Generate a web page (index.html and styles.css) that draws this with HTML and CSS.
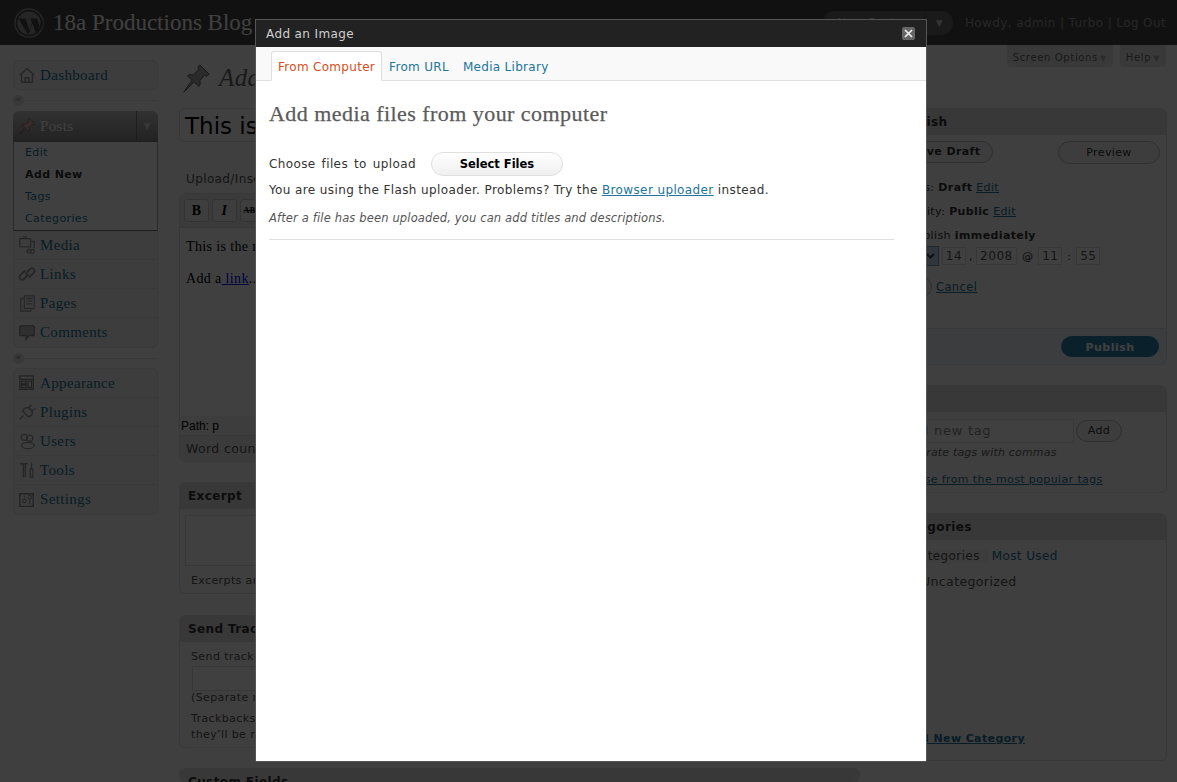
FILE: index.html
```html
<!DOCTYPE html>
<html lang="en">
<head>
<meta charset="utf-8">
<title>Add New Post</title>
<link rel="stylesheet" href="styles.css">
</head>
<body>
<svg class="defs" width="0" height="0" aria-hidden="true">
  <symbol id="pin" viewBox="0 0 32 32"><path d="M20 2l10 10-3 2-2-1-5 6c1 3 0 5-1 6l-5-5-11 11 9-13-5-4c1-2 3-2 6-1l6-6-1-2z" fill="currentColor" stroke="#555"/></symbol>
</svg>
<header class="top">
  <svg class="wplogo" width="30" height="30" viewBox="0 0 30 30"><circle cx="15" cy="15" r="14" fill="none" stroke="#999" stroke-width="1.4"/><circle cx="15" cy="15" r="11.6" fill="#999"/><path d="M4.5 10.5h7l4 12 2.6-7.5-1.6-4.5h6.6l4 12 2-6.5-1-5.5-4.5 15h-1.6l-3.5-10-3.5 10h-1.6z" fill="#464646"/></svg>
  <h1 class="blogname">18a Productions Blog</h1>
  <div class="favs"><span class="favs-main">New Post</span><span class="favs-arrow">▼</span></div>
  <p class="howdy">Howdy, <a>admin</a> | <a>Turbo</a> | <a>Log Out</a></p>
</header>
<div class="wrap">
  <nav class="side">
    <ul class="menu menu-dash">
      <li class="item"><svg class="ic" viewBox="0 0 20 20"><path d="M2 10l8-7 8 7M4 9v9h12V9M8 18v-5h4v5" fill="none" stroke="#999" stroke-width="1.5"/></svg>Dashboard</li>
    </ul>
    <div class="sep"><span class="sep-dot">«</span></div>
    <ul class="menu">
      <li class="item active"><svg class="ic" viewBox="0 0 32 32"><use href="#pin"/></svg>Posts<span class="toggle">▼</span></li>
      <li class="subs">
        <a class="sub">Edit</a>
        <a class="sub cur">Add New</a>
        <a class="sub">Tags</a>
        <a class="sub">Categories</a>
      </li>
      <li class="item"><svg class="ic" viewBox="0 0 20 20"><path d="M2 3h12v9H2zM5 1h4v2M15 6h3v8M12 15a2 2 0 1 0 .1 0M16 15a2 2 0 1 0 .1 0" fill="none" stroke="#999" stroke-width="1.4"/></svg>Media</li>
      <li class="item"><svg class="ic" viewBox="0 0 20 20"><path d="M8 10l6-6a3 3 0 0 1 4 4l-6 6M12 10l-6 6a3 3 0 0 1-4-4l6-6" fill="none" stroke="#999" stroke-width="2"/></svg>Links</li>
      <li class="item"><svg class="ic" viewBox="0 0 20 20"><path d="M7 2h11v14H7zM3 5h4M3 5v14h11v-3M9 5h7M9 8h7M9 11h7" fill="none" stroke="#999" stroke-width="1.4"/></svg>Pages</li>
      <li class="item last"><svg class="ic" viewBox="0 0 20 20"><path d="M3 2h14a1 1 0 0 1 1 1v9a1 1 0 0 1-1 1h-5l-3 4v-4H3a1 1 0 0 1-1-1V3a1 1 0 0 1 1-1z" fill="#bbb" stroke="#888" stroke-width="1.4"/></svg>Comments</li>
    </ul>
    <div class="sep sep-short"><span class="sep-dot">«</span></div>
    <ul class="menu">
      <li class="item"><svg class="ic" viewBox="0 0 20 20"><path d="M2 2h15v15H2zM2 6h15M4 8h5v3H4zM4 12h5v3H4zM11 8h4v7h-4z" fill="none" stroke="#888" stroke-width="1.4"/></svg>Appearance</li>
      <li class="item"><svg class="ic" viewBox="0 0 20 20"><path d="M2 18l4-4M5 9l6 6c3 0 5-2 5-5l-2-3-3-2c-3 0-5 2-6 4zM11 6l4-4M15 9l4-3" fill="none" stroke="#999" stroke-width="1.6"/></svg>Plugins</li>
      <li class="item"><svg class="ic" viewBox="0 0 20 20"><circle cx="7" cy="6" r="3.4" fill="none" stroke="#999" stroke-width="1.4"/><circle cx="13" cy="7" r="3.4" fill="none" stroke="#999" stroke-width="1.4"/><ellipse cx="11" cy="15" rx="7" ry="3.6" fill="none" stroke="#999" stroke-width="1.4"/></svg>Users</li>
      <li class="item"><svg class="ic" viewBox="0 0 20 20"><path d="M2 3h9M6 3v15M8 3v15M15 2v7M13.5 9h3v9h-3z" fill="none" stroke="#999" stroke-width="1.5"/></svg>Tools</li>
      <li class="item last"><svg class="ic" viewBox="0 0 20 20"><path d="M2 3h15v14H2z" fill="none" stroke="#888" stroke-width="1.5"/><circle cx="7" cy="11" r="2" fill="none" stroke="#999" stroke-width="1.3"/><circle cx="13" cy="7" r="2" fill="none" stroke="#999" stroke-width="1.3"/><path d="M7 5v4M13 9v6" stroke="#999" stroke-width="1.3"/></svg>Settings</li>
    </ul>
  </nav>
  <main class="content">
    <div class="screen-meta">
      <span class="meta-tab">Screen Options<i class="meta-arrow">▼</i></span>
      <span class="meta-tab">Help<i class="meta-arrow">▼</i></span>
    </div>
    <div class="heading">
      <svg class="bigpin" viewBox="0 0 32 32"><use href="#pin"/></svg>
      <h2 class="pagetitle">Add New Post</h2>
    </div>
    <div class="cols">
      <div class="leftcol">
        <div class="titlebox">This is the post title</div>
        <p class="upload">Upload/Insert</p>
        <section class="editor">
          <div class="toolbar">
            <span class="tbtn">B</span><span class="tbtn">I</span><span class="tbtn strike">ABC</span>
          </div>
          <div class="edit-body">
            <p class="edit-p">This is the main content of the post.</p>
            <p class="edit-p">Add a<a class="edit-link"> link</a>...</p>
          </div>
          <div class="pathrow">Path: p</div>
          <div class="wordrow">Word count: 12</div>
        </section>
        <section class="box box-excerpt">
          <h3 class="box-h">Excerpt</h3>
          <div class="excerpt-area"></div>
          <p class="small">Excerpts are optional hand-crafted summaries of your content.</p>
        </section>
        <section class="box box-track">
          <h3 class="box-h">Send Trackbacks</h3>
          <p class="small track-l">Send trackbacks to:</p>
          <div class="track-input"></div>
          <p class="small track-s">(Separate multiple URLs with spaces)</p>
          <p class="small track-n">Trackbacks are a way to notify legacy blog systems that you’ve linked to them. If you link other blogs,<br>they’ll be notified automatically.</p>
        </section>
        <section class="box box-custom">
          <h3 class="box-h">Custom Fields</h3>
        </section>
      </div>
      <aside class="rightcol">
        <section class="box box-publish">
          <h3 class="box-h">Publish</h3>
          <div class="pub-actions"><span class="pill save">Save Draft</span><span class="pill preview">Preview</span></div>
          <p class="pub-line first">Status: <b>Draft</b> <a class="lnk">Edit</a></p>
          <p class="pub-line vis">Visibility: <b>Public</b> <a class="lnk">Edit</a></p>
          <p class="pub-line when">Publish <b>immediately</b></p>
          <div class="dateline"><span class="sel">Dec<i class="sel-arrow"><svg width="9" height="6" viewBox="0 0 9 6"><path d="M1 1l3.500 3.500L8 1" fill="none" stroke="#345" stroke-width="2"/></svg></i></span><span class="inp w23">14</span><span>,</span><span class="inp w41">2008</span><span class="at">@</span><span class="inp w24">11</span><span class="colon">:</span><span class="inp w24">55</span></div>
          <div class="okline"><span class="pill ok">OK</span><a class="lnk">Cancel</a></div>
          <div class="pub-foot"><span class="pill primary">Publish</span></div>
        </section>
        <section class="box box-tags">
          <h3 class="box-h">Tags</h3>
          <div class="tagline"><span class="taginp">Add new tag</span><span class="pill add">Add</span></div>
          <p class="hint">Separate tags with commas</p>
          <a class="lnk popular">Choose from the most popular tags</a>
        </section>
        <section class="box box-cats">
          <h3 class="box-h">Categories</h3>
          <div class="cat-tabs"><span class="cat-all">All Categories</span><a class="cat-used">Most Used</a></div>
          <p class="cat-item">Uncategorized</p>
          <a class="lnk addcat">+ Add New Category</a>
        </section>
      </aside>
    </div>
  </main>
</div>

<div class="overlay"></div>
<div class="modal" role="dialog">
  <div class="modal-title"><span>Add an Image</span><span class="close"><svg width="9" height="9" viewBox="0 0 9 9"><path d="M1 1l7 7M8 1l-7 7" stroke="#eee" stroke-width="1.7"/></svg></span></div>
  <div class="tabs"><a class="tab on">From Computer</a><a class="tab">From URL</a><a class="tab">Media Library</a></div>
  <div class="modal-body">
    <h3 class="m-head">Add media files from your computer</h3>
    <div class="choose"><span>Choose files to upload</span><span class="select">Select Files</span></div>
    <p class="m-line">You are using the Flash uploader. Problems? Try the <a class="m-link">Browser uploader</a> instead.</p>
    <p class="m-note">After a file has been uploaded, you can add titles and descriptions.</p>
    <hr class="m-rule">
  </div>
</div>
</body>
</html>
```
FILE: styles.css
```css
* { box-sizing: border-box; }
html, body { margin: 0; height: 782px; overflow: hidden; }
body { background: #f9f9f9; color: #333; font: 12px "DejaVu Sans", sans-serif; letter-spacing: .385px; position: relative; }
p, h1, h2, h3, ul { margin: 0; padding: 0; }
ul { list-style: none; }
.defs { position: absolute; }

.top { height: 45px; background: #464646; display: flex; align-items: center; padding: 0 11px 0 14px; color: #ddd; }
.wplogo { flex: none; }
.blogname { font: 400 23px "Liberation Serif", serif; letter-spacing: 0; color: #fff; margin-left: 9px; flex: 1; }
.favs { width: 130px; height: 24px; border-radius: 12px; background: #6a6a6a; display: flex; align-items: center; margin-right: 12px; font-size: 12px; color: #ccc; }
.favs-main { flex: 1; padding-left: 14px; }
.favs-arrow { width: 28px; border-left: 1px solid #555; height: 24px; line-height: 24px; font-size: 9px; text-align: center; color: #ccc; }
.howdy { font-size: 12px; color: #999; }

.wrap { display: flex; padding-left: 13px; }
.side { width: 145px; flex: none; padding-top: 15px; }
.menu { border: 1px solid #e3e3e3; border-radius: 6px; background: #f1f1f1; }
.item { height: 29px; display: flex; align-items: center; border-bottom: 1px solid #e3e3e3; font: 15px "Liberation Serif", serif; letter-spacing: .35px; color: #21759b; position: relative; padding-left: 4px; }
.item.last, .menu-dash .item { border-bottom: 0; }
.menu-dash .item { height: 28px; }
.ic { width: 18px; height: 18px; margin-right: 4px; flex: none; }
.active { background: linear-gradient(#c4c4c4, #8a8a8a); color: #fff; border-radius: 6px 6px 0 0; margin: -1px -1px 0; padding-left: 5px; height: 30px; width: calc(100% + 2px); border-bottom: 0; }
.active .ic { color: #e2a8a8; }
.toggle { position: absolute; right: 0; top: 0; width: 22px; height: 30px; text-align: center; font: 9px/30px "DejaVu Sans", sans-serif; color: #ddd; border-left: 1px solid #777; }
.subs { background: #fff; border: 1px solid #aaa; border-top-color: #777; border-bottom-color: #777; margin: 0 -1px; display: flex; flex-direction: column; height: 90px; padding-left: 11px; position: relative; }
.sub { height: 22px; line-height: 22px; font-size: 11px; color: #21759b; }
.cur { color: #333; font-weight: 700; }
.sep { height: 21px; display: flex; align-items: center; position: relative; }
.sep-short { height: 20px; }
.sep::after { content: ""; flex: 1; height: 1px; background: #e3e3e3; }
.sep-dot { width: 11px; height: 11px; border-radius: 50%; background: #ddd; font-size: 9px; line-height: 9px; text-align: center; color: #999; }

.content { flex: 1; margin-left: 21px; padding-right: 10px; min-width: 0; }
.screen-meta { display: flex; justify-content: flex-end; gap: 7px; height: 22px; padding-right: 1px; }
.meta-tab { height: 22px; background: #e3e3e3; border-radius: 0 0 4px 4px; padding: 0 6px; font-size: 10px; line-height: 25px; color: #666; letter-spacing: .65px; }
.meta-arrow { font-style: normal; font-size: 8px; color: #aaa; margin-left: 2px; }
.heading { display: flex; align-items: center; height: 41px; padding-bottom: 20px; }
.bigpin { width: 30px; height: 30px; margin-left: 2px; flex: none; color: #aaa; }
.pagetitle { font: italic 400 25px "Liberation Serif", serif; color: #666; margin-left: 8px; }

.cols { display: flex; justify-content: space-between; }
.leftcol { width: 681px; }
.rightcol { width: 281px; }
.titlebox { height: 34px; border: 1px solid #dfdfdf; border-radius: 6px; background: #fff; padding-left: 5px; font-size: 23px; letter-spacing: 0; line-height: 35px; color: #000; white-space: nowrap; overflow: hidden; }
.upload { margin-top: 30px; padding-left: 7px; font-size: 12px; height: 15px; line-height: 15px; color: #555; }
.editor { margin-top: 6px; border: 1px solid #dfdfdf; border-radius: 6px; height: 269px; display: flex; flex-direction: column; background: #fff; }
.toolbar { height: 34px; background: #ececec; display: flex; gap: 3px; padding: 5px 4px 0; border-bottom: 1px solid #dfdfdf; border-radius: 6px 6px 0 0; flex: none; }
.tbtn { width: 25px; height: 23px; background: #f6f6f6; border: 1px solid #ccc; border-radius: 3px; font: 700 14px/21px "Liberation Serif", serif; text-align: center; color: #000; }
.strike { font-size: 8px; text-decoration: line-through; }
.tbtn:nth-child(2) { font-style: italic; }
.edit-body { flex: 1; padding: 11px 6px; font: 14px "Liberation Serif", serif; letter-spacing: .37px; color: #000; }
.edit-p { margin-bottom: 14px; height: 18px; }
.edit-link { color: #00f; text-decoration: underline; }
.pathrow { height: 20px; background: #f1f1f1; border-bottom: 1px solid #dfdfdf; font: 12px/20px "Liberation Sans", sans-serif; letter-spacing: 0; color: #000; padding-left: 1px; flex: none; }
.wordrow { height: 25px; padding-left: 6px; line-height: 25px; font-size: 12.5px; color: #555; background: #eaeaea; border-radius: 0 0 6px 6px; flex: none; }

.box { border: 1px solid #dfdfdf; border-radius: 6px; background: #f9f9f9; }
.box-h { height: 26px; background: #dfdfdf; border-radius: 5px 5px 0 0; font-size: 12px; font-weight: 700; line-height: 26px; padding-left: 8px; color: #333; }
.small { font-size: 11px; color: #555; line-height: 16px; white-space: nowrap; }
.box-excerpt { margin-top: 20px; height: 112px; }
.excerpt-area { margin: 6px 5px 0; height: 51px; background: #fff; border: 1px solid #ddd; }
.box-excerpt .small { margin-top: 7px; padding-left: 11px; }
.box-track { margin-top: 21px; height: 133px; }
.track-l { padding: 7px 11px 0; }
.track-input { margin: 1px 12px 0; height: 25px; background: #fff; border: 1px solid #ddd; }
.track-s { padding: 0 11px; margin-top: -1px; }
.track-n { padding: 5px 11px 0; }
.box-custom { margin-top: 20px; height: 14px; overflow: hidden; border-bottom: 0; }

.box-publish { height: 257px; position: relative; }
.pub-actions { display: flex; justify-content: space-between; padding: 0 6px 0 11px; height: 34px; align-items: center; }
.pill { display: inline-block; border: 1px solid #bbb; border-radius: 12px; background: #f2f2f2; text-align: center; font-size: 11px; height: 22px; line-height: 20px; color: #333; }
.save { width: 95px; font-weight: 700; }
.preview { width: 102px; height: 23px; line-height: 22px; }
.pub-line { padding-left: 6px; font-size: 11px; line-height: 24px; height: 24px; color: #333; }
.vis { padding-left: 5px; }
.when { padding-left: 22px; }
.first { margin-top: 7px; }
.lnk { color: #21759b; text-decoration: underline; }
.dateline { display: flex; align-items: center; gap: 3px; padding-left: 10px; height: 22px; margin-top: -3px; font-size: 11px; }
.sel { width: 42px; height: 20px; background: #fff; border: 1px solid #7f9db9; font-size: 11px; line-height: 18px; display: flex; justify-content: space-between; }
.sel-arrow { width: 15px; background: #c1d2ee; display: flex; align-items: center; justify-content: center; }
.inp { height: 18px; background: #fff; border: 1px solid #ddd; text-align: center; line-height: 16px; font-size: 12px; color: #555; letter-spacing: .5px; }
.w23 { width: 24px; }
.w41 { width: 41px; }
.w24 { width: 24px; }
.at { margin: 0 2px; }
.colon { margin: 0 2px; }
.okline { display: flex; align-items: center; gap: 4px; padding-left: 11px; margin-top: 9px; font-size: 11.5px; }
.ok { width: 34px; }
.pub-foot { position: absolute; left: 0; right: 0; bottom: 0; height: 36px; background: #eaf2fa; border-top: 1px solid #dfdfdf; border-radius: 0 0 6px 6px; display: flex; justify-content: flex-end; align-items: center; padding: 0 7px 0 0; }
.primary { width: 98px; height: 21px; line-height: 21px; background: #2a84ad; border-color: #2a84ad; color: #fff; font-weight: 700; letter-spacing: .5px; }
.box-tags { margin-top: 20px; height: 108px; }
.tagline { display: flex; align-items: center; gap: 2px; padding: 7px 0 0 5px; }
.taginp { width: 182px; height: 24px; border: 1px solid #ddd; background: #fff; font-size: 13px; line-height: 22px; padding-left: 9px; color: #888; letter-spacing: .7px; white-space: nowrap; }
.add { width: 46px; font-size: 11px; }
.hint { padding-left: 11px; margin-top: 2px; font-style: italic; font-size: 11px; letter-spacing: .18px; color: #666; line-height: 16px; }
.popular { display: block; padding-left: 8px; margin-top: 11px; font-size: 11px; line-height: 16px; }
.box-cats { margin-top: 20px; height: 248px; position: relative; }
.cat-tabs { display: flex; gap: 4px; align-items: center; padding-left: 4px; height: 31px; font-size: 12px; }
.cat-all { background: #f1f1f1; color: #555; padding-right: 8px; }
.cat-used { color: #21759b; }
.cat-item { padding-left: 34px; margin-top: 2px; font-size: 12.5px; color: #555; line-height: 18px; }
.addcat { position: absolute; left: 3px; bottom: 15px; font-size: 11px; font-weight: 700; }

.overlay { position: absolute; inset: 0; background: #000; opacity: .75; }
.modal { position: absolute; left: 255px; top: 19px; width: 672px; height: 743px; border: 1px solid #555; background: #fff; display: flex; flex-direction: column; }
.modal-title { height: 27px; flex: none; background: #222; color: #cfcfcf; display: flex; justify-content: space-between; align-items: center; padding: 0 11px 0 10px; font-size: 12px; }
.close { width: 13px; height: 13px; background: #666; border-radius: 2px; display: flex; align-items: center; justify-content: center; }
.tabs { height: 34px; flex: none; background: #f9f9f9; border-bottom: 1px solid #dfdfdf; display: flex; align-items: flex-end; padding-left: 15px; letter-spacing: .3px; }
.tab { height: 30px; padding: 0 7px; line-height: 32px; font-size: 12px; color: #21759b; margin-bottom: -1px; }
.tab.on { color: #d54e21; background: #fff; border: 1px solid #dfdfdf; border-bottom-color: #fff; border-radius: 3px 3px 0 0; padding: 0 6px; line-height: 30px; }
.modal-body { padding: 0 32px 0 13px; flex: 1; }
.m-head { font: 400 22px/26px "Liberation Serif", serif; letter-spacing: .45px; -webkit-text-stroke: .25px #5a5a5a; color: #5a5a5a; margin-top: 20px; }
.choose { display: flex; align-items: center; gap: 15px; margin-top: 25px; font-size: 12px; color: #333; word-spacing: 1.75px; }
.select { width: 132px; height: 24px; border: 1px solid #dfdfdf; border-radius: 12px; background: linear-gradient(#fff, #f0f0f0); text-align: center; font-size: 11.5px; font-weight: 700; letter-spacing: 0; word-spacing: 0; color: #000; line-height: 22px; }
.m-line { margin-top: 6px; line-height: 17px; color: #333; }
.m-link { color: #21759b; text-decoration: underline; }
.m-note { margin-top: 11px; font-size: 11.5px; letter-spacing: .15px; font-style: italic; color: #555; line-height: 17px; }
.m-rule { border: 0; border-top: 1px solid #dfdfdf; margin: 12px 0 0; }
```
